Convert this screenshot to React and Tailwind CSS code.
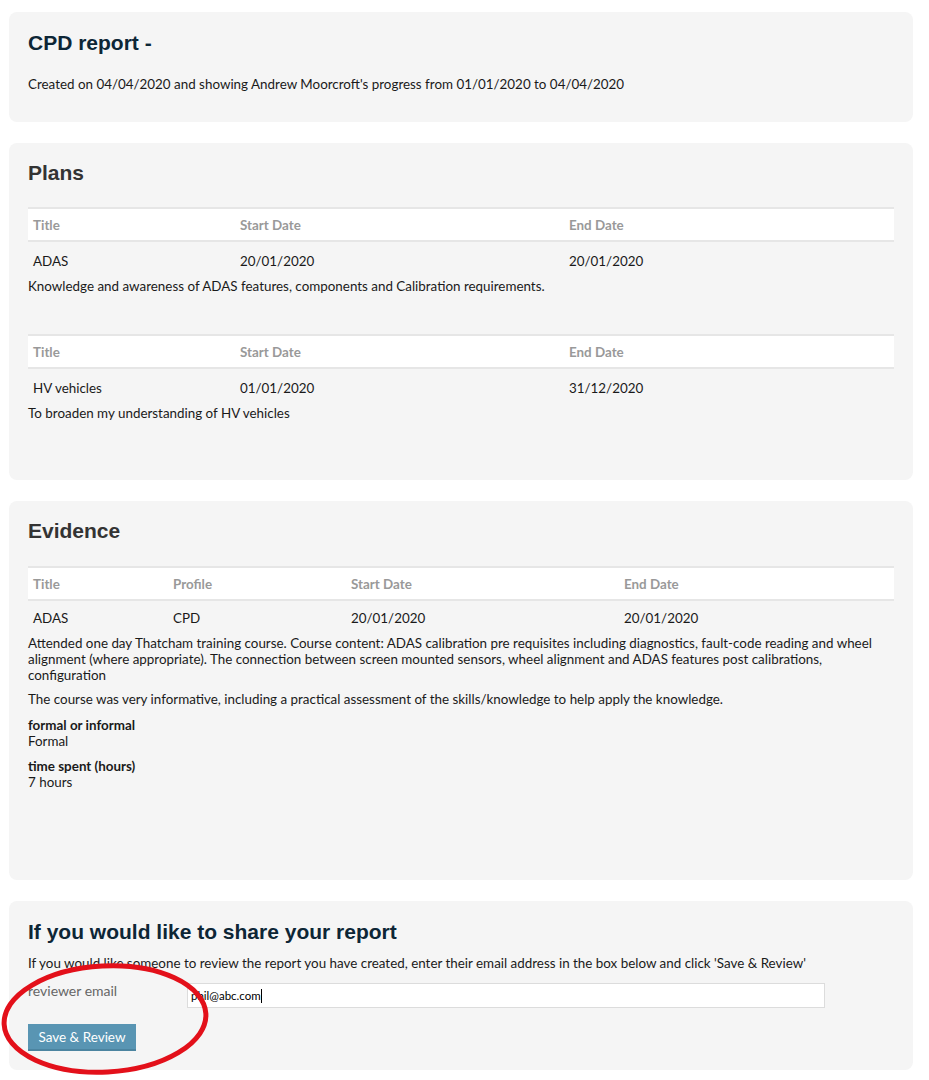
import React from 'react';

const body = { fontFamily: 'Lato, "DejaVu Sans", sans-serif' };

const plans = [
  {
    title: 'ADAS',
    start: '20/01/2020',
    end: '20/01/2020',
    description: 'Knowledge and awareness of ADAS features, components and Calibration requirements.',
  },
  {
    title: 'HV vehicles',
    start: '01/01/2020',
    end: '31/12/2020',
    description: 'To broaden my understanding of HV vehicles',
  },
];

const Heading = ({ children, className = '' }) => (
  <h2
    className={`text-[21px] leading-[24px] font-bold ${className}`}
    style={{ fontFamily: '"Liberation Sans", Arial, sans-serif' }}
  >
    {children}
  </h2>
);

const Card = ({ children, className = '' }) => (
  <section className={`bg-[#f5f5f5] rounded-[8px] px-[19px] ${className}`}>{children}</section>
);

const HeaderCell = ({ children, w }) => (
  <th className={`${w} text-left font-bold text-[#999] px-[5px] h-[33px]`}>{children}</th>
);

const App = () => {
  return (
    <div className="relative bg-white min-h-screen pt-[12px] pl-[9px] pb-[10px] text-[13.4px] leading-[16px] text-[#1a1a1a]" style={body}>
      <div className="w-[904px] flex flex-col gap-[21px]">
        {/* Header */}
        <Card className="pt-[19px] h-[110px]">
          <Heading className="text-[#0d2636]">CPD report -</Heading>
          <p className="mt-[21px]">
            Created on 04/04/2020 and showing Andrew Moorcroft's progress from 01/01/2020 to 04/04/2020
          </p>
        </Card>

        {/* Plans */}
        <Card className="pt-[18px] h-[337px]">
          <Heading className="text-[#333]">Plans</Heading>
          {plans.map((plan, i) => (
            <div key={plan.title} className={i === 0 ? 'mt-[22px]' : 'mt-[40px]'}>
              <table className="w-full border-collapse">
                <thead>
                  <tr className="bg-white border-t-2 border-b-2 border-[#e6e6e6]">
                    <HeaderCell w="w-[207px]">Title</HeaderCell>
                    <HeaderCell w="w-[329px]">Start Date</HeaderCell>
                    <HeaderCell w="">End Date</HeaderCell>
                  </tr>
                </thead>
                <tbody>
                  <tr>
                    <td className="px-[5px] h-[37px] pt-[2px]">{plan.title}</td>
                    <td className="px-[5px] h-[37px] pt-[2px]">{plan.start}</td>
                    <td className="px-[5px] h-[37px] pt-[2px]">{plan.end}</td>
                  </tr>
                </tbody>
              </table>
              <p>{plan.description}</p>
            </div>
          ))}
        </Card>

        {/* Evidence */}
        <Card className="pt-[18px] h-[379px]">
          <Heading className="text-[#333]">Evidence</Heading>
          <table className="w-full border-collapse mt-[23px]">
            <thead>
              <tr className="bg-white border-t-2 border-b-2 border-[#e6e6e6]">
                <HeaderCell w="w-[140px]">Title</HeaderCell>
                <HeaderCell w="w-[178px]">Profile</HeaderCell>
                <HeaderCell w="w-[273px]">Start Date</HeaderCell>
                <HeaderCell w="">End Date</HeaderCell>
              </tr>
            </thead>
            <tbody>
              <tr>
                <td className="px-[5px] h-[35px]">ADAS</td>
                <td className="px-[5px] h-[35px]">CPD</td>
                <td className="px-[5px] h-[35px]">20/01/2020</td>
                <td className="px-[5px] h-[35px]">20/01/2020</td>
              </tr>
            </tbody>
          </table>
          <p>
            Attended one day Thatcham training course. Course content: ADAS calibration pre requisites including
            diagnostics, fault-code reading and wheel alignment (where appropriate). The connection between screen
            mounted sensors, wheel alignment and ADAS features post calibrations, configuration
          </p>
          <p className="mt-[8px]">
            The course was very informative, including a practical assessment of the skills/knowledge to help apply
            the knowledge.
          </p>
          <div className="mt-[10px]">
            <div className="font-bold">formal or informal</div>
            <div>Formal</div>
          </div>
          <div className="mt-[9px]">
            <div className="font-bold">time spent (hours)</div>
            <div>7 hours</div>
          </div>
        </Card>

        {/* Share */}
        <Card className="pt-[19px] h-[169px]">
          <Heading className="text-[#0d2636]">If you would like to share your report</Heading>
          <p className="mt-[11px]">
            If you would like someone to review the report you have created, enter their email address in the box
            below and click 'Save &amp; Review'
          </p>
          <div className="flex items-start mt-[12px]">
            <label className="w-[159px] text-[14px] leading-[16px] text-[#666]">reviewer email</label>
            <div className="w-[638px] h-[25px] bg-white border border-[#dcdcdc] flex items-center px-[3px] text-[11.5px] text-black">
              phil@abc.com
              <span className="inline-block w-px h-[14px] bg-black" />
            </div>
          </div>
          <button className="mt-[16px] w-[108px] h-[27px] bg-[#5995b3] border-b-2 border-[#4b84a0] text-white text-[13.5px]">
            Save &amp; Review
          </button>
        </Card>
      </div>

      {/* hand-drawn annotation */}
      <svg className="absolute left-0 top-[960px] pointer-events-none" width="220" height="120" viewBox="0 0 220 120">
        <ellipse cx="105" cy="59" rx="101" ry="53" fill="none" stroke="#e3101a" strokeWidth="5" transform="rotate(-3 105 59)" />
      </svg>
    </div>
  );
};

export default App;
